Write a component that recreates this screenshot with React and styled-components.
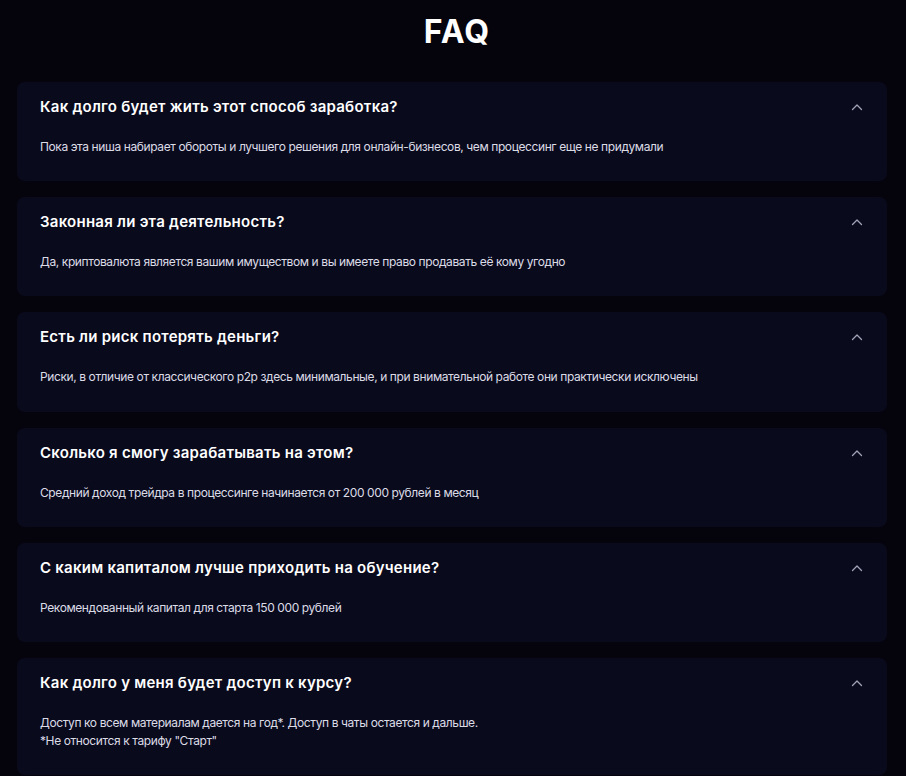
import React from 'react';
import styled, { createGlobalStyle } from 'styled-components';

const GlobalStyle = createGlobalStyle`
  html, body {
    margin: 0;
    padding: 0;
    background: #05040d;
  }
  body {
    font-family: Inter, "Noto Sans", sans-serif;
    -webkit-font-smoothing: antialiased;
  }
`

const faq = [
    {
        q: 'Как долго будет жить этот способ заработка?',
        a: ['Пока эта ниша набирает обороты и лучшего решения для онлайн-бизнесов, чем процессинг еще не придумали'],
    },
    {
        q: 'Законная ли эта деятельность?',
        a: ['Да, криптовалюта является вашим имуществом и вы имеете право продавать её кому угодно'],
    },
    {
        q: 'Есть ли риск потерять деньги?',
        a: ['Риски, в отличие от классического p2p здесь минимальные, и при внимательной работе они практически исключены'],
    },
    {
        q: 'Сколько я смогу зарабатывать на этом?',
        a: ['Средний доход трейдра в процессинге начинается от 200 000 рублей в месяц'],
    },
    {
        q: 'С каким капиталом лучше приходить на обучение?',
        a: ['Рекомендованный капитал для старта 150 000 рублей'],
    },
    {
        q: 'Как долго у меня будет доступ к курсу?',
        a: ['Доступ ко всем материалам дается на год*. Доступ в чаты остается и дальше.', '*Не относится к тарифу "Старт"'],
    },
]

const Chevron = () => (
    <svg width="12" height="8" viewBox="0 0 12 8" fill="none">
        <path d="M1.5 6.5L6 2l4.5 4.5" stroke="#a4a4b8" strokeWidth="1.3" strokeLinecap="round" strokeLinejoin="round"/>
    </svg>
)

const App = () => {
    return (
        <Page>
            <GlobalStyle/>
            <Title>FAQ</Title>
            <List>
                {faq.map(item =>
                    <Card key={item.q}>
                        <Head>
                            <Question>{item.q}</Question>
                            <Toggle><Chevron/></Toggle>
                        </Head>
                        <Answer>
                            {item.a.map(line => <div key={line}>{line}</div>)}
                        </Answer>
                    </Card>
                )}
            </List>
        </Page>
    )
}

const Page = styled.div`
    min-height: 776px;
    padding: 12px 19px 0 17px;
    box-sizing: border-box;
`
const Title = styled.h1`
    margin: 0;
    padding-left: 10px;
    text-align: center;
    color: #ffffff;
    font-size: 32px;
    font-weight: 700;
    line-height: 40px;
    letter-spacing: 1px;
`
const List = styled.div`
    margin-top: 30px;
    display: flex;
    flex-direction: column;
    gap: 16px;
`
const Card = styled.div`
    background: #0a0a1d;
    border-radius: 8px;
    padding: 15px 24px 25px 23px;
    min-height: 99.2px;
    box-sizing: border-box;
`
const Head = styled.div`
    display: flex;
    align-items: center;
    justify-content: space-between;
    height: 20px;
`
const Question = styled.div`
    color: #ffffff;
    font-size: 15px;
    font-weight: 600;
    line-height: 20px;
    letter-spacing: 0.25px;
`
const Toggle = styled.div`
    display: flex;
    align-items: center;
    cursor: pointer;
`
const Answer = styled.div`
    margin-top: 21px;
    color: #dcdce6;
    font-size: 12px;
    line-height: 18px;
    letter-spacing: -0.4px;
`

export default App
